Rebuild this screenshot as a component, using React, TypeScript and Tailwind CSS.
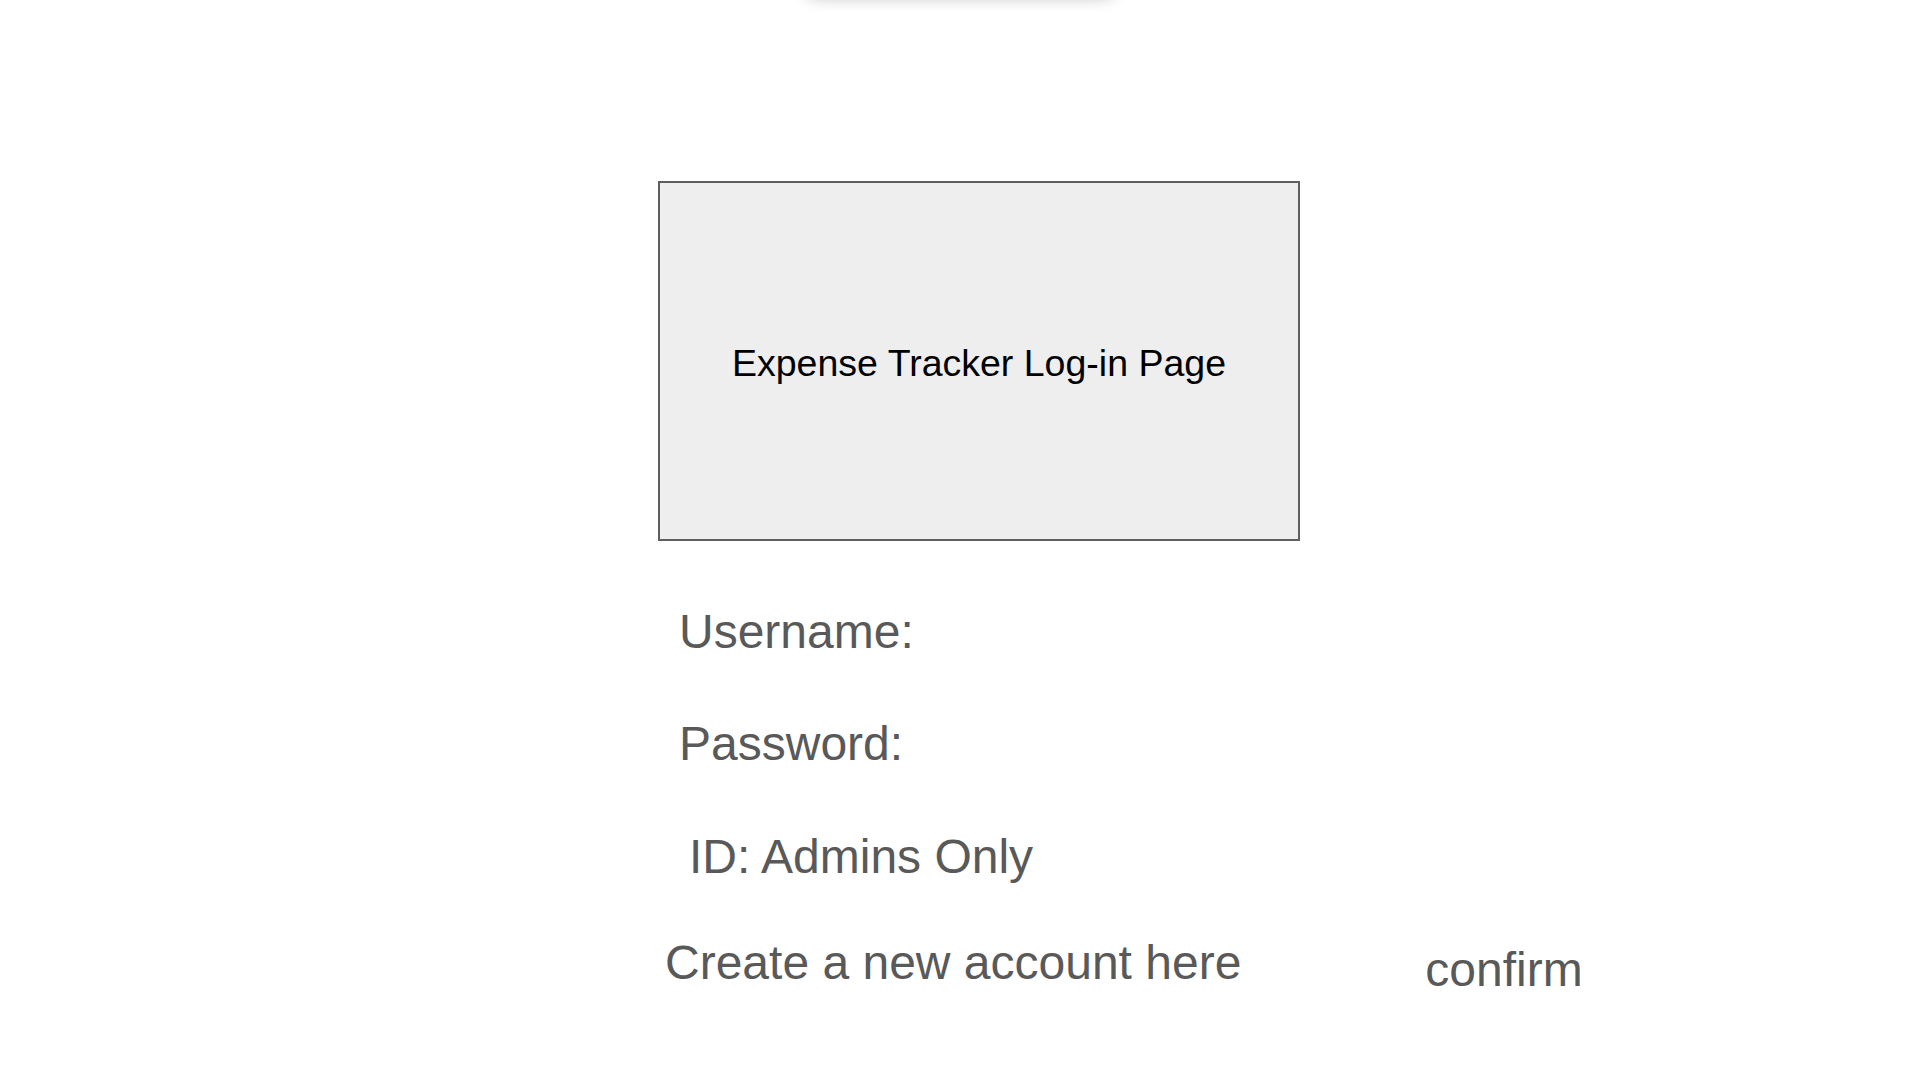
export default function App() {
  return (
    <div className="relative w-[1920px] h-[1080px] overflow-hidden bg-white font-['Liberation_Sans',Arial,sans-serif]">
      {/* Partially visible element above the page edge */}
      <div className="absolute left-[800px] top-[-40px] w-[320px] h-[40px] rounded-full bg-white shadow-[0_0_14px_rgba(0,0,0,0.18)]" />

      {/* Header card */}
      <div className="ml-[658px] pt-[181px]">
        <div className="w-[642px] h-[360px] border-2 border-[#5f5f5f] bg-[#eeeeee] flex items-center justify-center">
          <span className="pt-[5px] text-[37.5px] leading-none text-black">Expense Tracker Log-in Page</span>
        </div>
      </div>

      {/* Form labels */}
      <div className="flex flex-col text-[48px] leading-none text-[#595959]">
        <div className="ml-[679px] mt-[67px]">Username:</div>
        <div className="ml-[679px] mt-[64px]">Password:</div>
        <div className="ml-[689px] mt-[65px]">ID: Admins Only</div>
        <div className="ml-[665px] mt-[58px] flex items-start gap-[184px]">
          <span>Create a new account here</span>
          <span className="mt-[7px]">confirm</span>
        </div>
      </div>
    </div>
  )
}
